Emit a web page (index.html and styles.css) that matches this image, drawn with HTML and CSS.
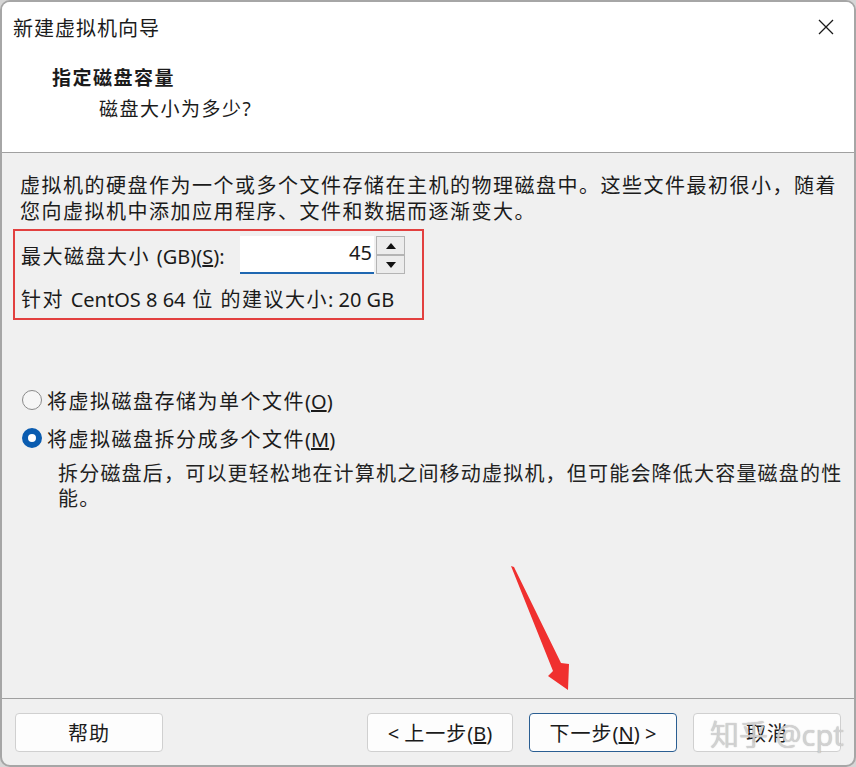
FILE: index.html
```html
<!DOCTYPE html>
<html lang="zh-CN">
<head>
    <meta charset="UTF-8">
    <title>新建虚拟机向导</title>
    <link rel="stylesheet" href="styles.css">
</head>
<body>
    <div class="window">
        <div class="header">
            <div class="titlebar">
                <span class="title">新建虚拟机向导</span>
                <svg class="close" width="16" height="16" viewBox="0 0 16 16">
                    <path d="M1 1 L15 15 M15 1 L1 15" stroke="#1a1a1a" stroke-width="1.3" fill="none"/>
                </svg>
            </div>
            <div class="heading">指定磁盘容量</div>
            <div class="subheading">磁盘大小为多少?</div>
        </div>

        <div class="content">
            <p class="intro">虚拟机的硬盘作为一个或多个文件存储在主机的物理磁盘中。这些文件最初很小，随着您向虚拟机中添加应用程序、文件和数据而逐渐变大。</p>

            <!-- red annotation box -->
            <div class="highlight">
                <div class="size-row">
                    <span class="size-label">最大磁盘大小 <span class="lat">(GB)(<u>S</u>):</span></span>
                    <div class="spin-input"><span class="lat">45</span></div>
                    <div class="spin-btns">
                        <div class="spin-btn">
                            <svg width="10" height="6" viewBox="0 0 10 6"><path d="M0 6 L5 0 L10 6 Z" fill="#111"/></svg>
                        </div>
                        <div class="spin-btn">
                            <svg width="10" height="6" viewBox="0 0 10 6"><path d="M0 0 L10 0 L5 6 Z" fill="#111"/></svg>
                        </div>
                    </div>
                </div>
                <div class="hint">针对 <span class="lat">CentOS 8 64</span> 位 的建议大小<span class="lat">: 20 GB</span></div>
            </div>

            <div class="options">
                <div class="radio-row">
                    <span class="radio"></span>
                    <span>将虚拟磁盘存储为单个文件<span class="lat">(<u>O</u>)</span></span>
                </div>
                <div class="radio-row">
                    <span class="radio checked"></span>
                    <span>将虚拟磁盘拆分成多个文件<span class="lat">(<u>M</u>)</span></span>
                </div>
                <p class="option-note">拆分磁盘后，可以更轻松地在计算机之间移动虚拟机，但可能会降低大容量磁盘的性能。</p>
            </div>
        </div>

        <div class="footer">
            <button class="btn">帮助</button>
            <div class="footer-right">
                <button class="btn"><span class="lat">&lt; </span>上一步<span class="lat">(<u>B</u>)</span></button>
                <button class="btn focused">下一步<span class="lat">(<u>N</u>) &gt;</span></button>
                <button class="btn">取消</button>
            </div>
        </div>

        <!-- annotation arrow -->
        <svg class="arrow" width="80" height="140" viewBox="500 560 80 140">
            <path d="M511 566 L514 567 L561 663 L569 664 L568 690 L548 676 L553 671 Z" fill="#f0302f"/>
        </svg>

        <div class="watermark">知乎 @cpt</div>
    </div>
</body>
</html>
```

FILE: styles.css
```css
body {
    margin: 0;
    padding: 0;
    background-color: #d6d6d6;
    font-family: "Noto Sans", "Noto Sans CJK SC", sans-serif;
    font-size: 20px;
    letter-spacing: 1.5px;
    color: #1b1b1b;
}

.lat {
    letter-spacing: 0;
}

.window {
    position: relative;
    width: 856px;
    height: 767px;
    box-sizing: border-box;
    border: 2px solid #a6a6a6;
    border-radius: 10px;
    background-color: #f0f0f0;
    display: flex;
    flex-direction: column;
    overflow: hidden;
}

/* Header */
.header {
    height: 150px;
    background-color: #fff;
    border-bottom: 1px solid #a0a0a0;
}

.titlebar {
    height: 50px;
    display: flex;
    align-items: center;
    justify-content: space-between;
    padding: 0 20px 0 11px;
}

.title {
    letter-spacing: 1px;
}

.heading {
    margin-top: 13px;
    padding-left: 50px;
    line-height: 26px;
    font-weight: bold;
    font-size: 19px;
}

.subheading {
    margin-top: 5px;
    padding-left: 97px;
    line-height: 26px;
    font-size: 19px;
}

/* Content */
.content {
    flex: 1;
    padding: 20px 12px 0 18px;
}

.intro {
    margin: 0;
    line-height: 26px;
}

.highlight {
    margin: 4px 0 0 -7px;
    width: 411px;
    height: 91px;
    box-sizing: border-box;
    border: 2px solid #e2403f;
    padding: 5px 0 0 6px;
}

.size-row {
    display: flex;
    align-items: center;
}

.size-label {
    width: 219px;
}

.spin-input {
    width: 134px;
    height: 38px;
    box-sizing: border-box;
    background-color: #fff;
    border-bottom: 2px solid #1f67b1;
    text-align: right;
    padding-right: 2px;
    line-height: 34px;
}

.spin-btns {
    display: flex;
    flex-direction: column;
    margin-left: 2px;
    height: 38px;
}

.spin-btn {
    width: 29px;
    height: 19px;
    box-sizing: border-box;
    background-color: #ececec;
    border: 1px solid #b4b4b4;
    display: flex;
    align-items: center;
    justify-content: center;
}

.hint {
    margin-top: 13px;
    line-height: 26px;
}

.options {
    margin-top: 65px;
}

.radio-row {
    display: flex;
    align-items: center;
    gap: 5px;
    height: 30px;
    margin-bottom: 8px;
    margin-left: 2px;
}

.radio {
    width: 20px;
    height: 20px;
    box-sizing: border-box;
    border-radius: 50%;
    border: 1px solid #8a8a8a;
    background-color: #f6f6f6;
}

.radio.checked {
    border: 6px solid #0a5cb0;
    background-color: #fff;
}

.option-note {
    margin: 7px -10px 0 38px;
    line-height: 25px;
    letter-spacing: 1.2px;
    color: #222;
}

/* Footer */
.footer {
    height: 67px;
    border-top: 1px solid #a0a0a0;
    box-sizing: border-box;
    display: flex;
    justify-content: space-between;
    padding: 14px 13px 0 13px;
}

.footer-right {
    display: flex;
    gap: 16px;
}

.btn {
    width: 148px;
    height: 39px;
    background-color: #fdfdfd;
    border: 1px solid #d0d0d0;
    border-radius: 4px;
    font-family: inherit;
    font-size: 20px;
    letter-spacing: 1px;
    color: #1b1b1b;
    padding: 0;
}

.footer-right .btn:first-child {
    width: 146px;
}

.btn.focused {
    border-color: #2a5e92;
}

/* Annotation overlays */
.arrow {
    position: absolute;
    left: 498px;
    top: 558px;
}

.watermark {
    position: absolute;
    left: 708px;
    top: 710px;
    font-size: 29px;
    letter-spacing: 0;
    color: rgba(215, 215, 215, 0.85);
    text-shadow: 0 0 1px rgba(120, 120, 120, 0.6);
}
```
